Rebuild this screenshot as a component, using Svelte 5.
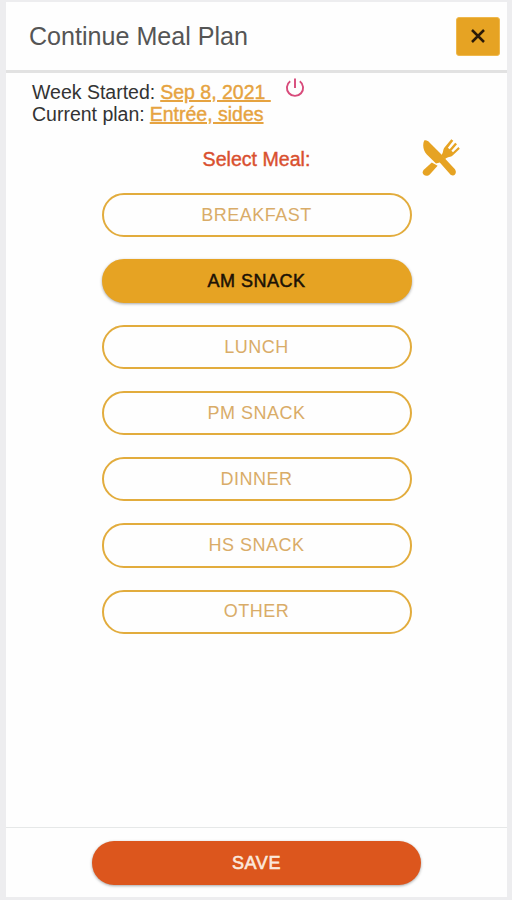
<script lang="ts">
	const meals = ['Breakfast', 'AM Snack', 'Lunch', 'PM Snack', 'Dinner', 'HS Snack', 'Other'];
	let selected = $state('AM Snack');
</script>

<div class="page">
	<div class="dialog">
		<header>
			<h1>Continue Meal Plan</h1>
			<button class="close" type="button" aria-label="Close">
				<svg width="14" height="14" viewBox="0 0 14 14">
					<path d="M1 1L13 13M13 1L1 13" stroke="#2b1a08" stroke-width="2.5" />
				</svg>
			</button>
		</header>
		<main>
			<div class="info">
				<div class="week">
					<span class="label">Week Started:</span>
					<span class="value date">Sep 8, 2021&nbsp;</span>
					<svg class="power" width="20" height="20" viewBox="0 0 20 20">
						<path
							d="M5.2 3.3A8.1 8.1 0 1 0 14.8 3.3M10 .5V10"
							fill="none"
							stroke="#d84b7b"
							stroke-width="1.9"
						/>
					</svg>
				</div>
				<div class="plan">
					<span class="label">Current plan:</span>
					<span class="value entree">Entrée, sides</span>
				</div>
			</div>
			<div class="select">
				<h2>Select Meal:</h2>
				<svg class="utensils" width="38" height="38" viewBox="0 0 38 38" fill="#e6a323">
					<path
						d="M2.2 1.5C4.5 .8 6 2 7.5 3.5L18.5 14.4C20.3 16.2 20.2 18.1 22 18.5L32.5 29.8C35.8 33.5 32.6 38.4 28.6 35.8L17.8 23.6L14 24.5L4.8 15.4C1.3 11.8 .2 5.8 2.2 1.5Z"
					/>
					<path d="M9.8 23.6L15.6 26.8L8 35.2C4 39-1.8 34.8 1.8 30.8Z" />
					<path
						d="M18.8 16.4C22 14 20.4 10.8 22.5 8.4L29.3 .3L31.3 1.8L25.9 8.7L27.6 10.2L33.2 3.8L35 5.3L29.4 11.8L31 13.2L36.4 8L37.8 9.8L30.9 16.3C28.6 18.8 25.8 17.4 23 20.2Z"
					/>
				</svg>
			</div>
			<div class="meals">
				{#each meals as meal}
					<button
						type="button"
						class="meal"
						class:active={selected === meal}
						onclick={() => (selected = meal)}
					>
						{meal}
					</button>
				{/each}
			</div>
		</main>
		<footer>
			<button class="save" type="button">Save</button>
		</footer>
	</div>
</div>

<style>
	:global(body) {
		background: #ededef;
		font-family: 'Liberation Sans', Arial, sans-serif;
	}
	.page {
		box-sizing: border-box;
		height: 900px;
		padding: 2px 5px 3px 6px;
	}
	.dialog {
		height: 100%;
		display: flex;
		flex-direction: column;
		background: #fefefe;
	}
	button {
		box-sizing: border-box;
		padding: 0;
		font-family: inherit;
		font-size: 18px;
		text-transform: uppercase;
		cursor: pointer;
	}
	svg {
		display: block;
	}
	header {
		box-sizing: border-box;
		height: 71px;
		flex: none;
		display: flex;
		align-items: center;
		justify-content: space-between;
		padding: 0 7px 0 23px;
		border-bottom: 3px solid #e2e2e2;
	}
	h1 {
		margin: 0;
		font-size: 25.1px;
		font-weight: 400;
		color: #555;
	}
	.close {
		width: 44px;
		height: 39px;
		display: flex;
		align-items: center;
		justify-content: center;
		background: #e6a323;
		border: 1px solid #efb84c;
		border-radius: 3px;
	}
	main {
		flex: 1;
	}
	.info {
		padding: 8px 0 1px 26px;
		font-size: 19.5px;
		line-height: 22px;
		color: #333;
	}
	.week,
	.plan {
		display: flex;
		gap: 5px;
		height: 22px;
	}
	.value {
		color: #e6a340;
		text-decoration: underline;
		text-decoration-thickness: 2px;
		text-underline-offset: 1px;
		-webkit-text-stroke: 0.4px #e6a340;
	}
	.power {
		margin: -3px 0 0 9px;
	}
	.select {
		position: relative;
		padding-top: 21px;
	}
	h2 {
		margin: 0;
		font-size: 19.6px;
		line-height: 24px;
		font-weight: 400;
		text-align: center;
		color: #d9502f;
		-webkit-text-stroke: 0.4px #d9502f;
	}
	.utensils {
		position: absolute;
		top: 13px;
		right: 47px;
	}
	.meals {
		display: flex;
		flex-direction: column;
		align-items: center;
		gap: 22px;
		padding: 22px 0 0;
	}
	.meal {
		width: 310px;
		height: 44.1px;
		background: #fefefe;
		border: 2px solid #e2ac3d;
		border-radius: 22px;
		color: #d9ac68;
		letter-spacing: 0.5px;
	}
	.meal.active {
		background: #e6a323;
		border-color: #e6a323;
		color: #1c1206;
		-webkit-text-stroke: 0.5px #1c1206;
		box-shadow: 0 1px 3px rgba(0, 0, 0, 0.35);
	}
	footer {
		box-sizing: border-box;
		height: 70px;
		flex: none;
		display: flex;
		justify-content: center;
		padding-top: 13px;
		border-top: 1px solid #e6e8e8;
	}
	.save {
		width: 329px;
		height: 44px;
		background: #dc561d;
		border: 0;
		border-radius: 22px;
		color: #fbe9dc;
		letter-spacing: 0.6px;
		-webkit-text-stroke: 0.6px #fbe9dc;
		box-shadow: 0 1px 3px rgba(0, 0, 0, 0.35);
	}
</style>
